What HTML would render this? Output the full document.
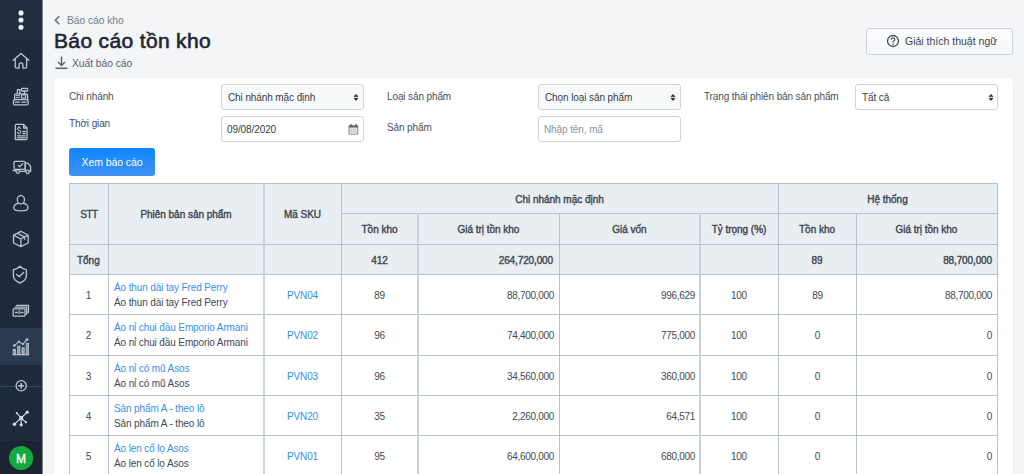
<!DOCTYPE html><html><head><meta charset="utf-8"><style>
*{box-sizing:border-box;margin:0;padding:0}
html,body{width:1024px;height:474px;overflow:hidden;background:#f4f5f7;font-family:"Liberation Sans",sans-serif;color:#212b36}
.ab{position:absolute;white-space:nowrap}
.sb{position:absolute;left:0;top:0;width:42px;height:474px;background:#1f2b3c}
.lbl{position:absolute;font-size:10px;color:#46505b;white-space:nowrap;letter-spacing:-0.12px}
.inp{position:absolute;width:143px;height:26px;border:1px solid #cfd5dc;border-radius:3px;background:#fff;font-size:10px;color:#363d46;padding-left:6px;line-height:26px;white-space:nowrap;letter-spacing:-0.1px}
.sel{background:#f8f9fa}
.btn{position:absolute;left:69px;top:148px;width:86px;height:28px;background:linear-gradient(#0d86ff,#3f92f2);border-radius:3px;color:#fff;font-size:10.5px;line-height:29px;text-align:center;letter-spacing:-0.1px}
.hl{position:absolute;height:1px;background:#b5c2cd}
.vl{position:absolute;width:1px;background:#b5c2cd}
.hbg{position:absolute;background:#e9eef2}
.th{position:absolute;font-size:10px;color:#3e4852;-webkit-text-stroke:0.4px #3e4852;white-space:nowrap;text-align:center;letter-spacing:-0.03px}
.td{position:absolute;font-size:10px;color:#424a53;white-space:nowrap;letter-spacing:-0.12px}
.num{letter-spacing:-0.3px}
.lk{color:#3590f0}
</style></head><body>
<div class="sb"></div>
<div class="ab" style="left:0;top:0;width:42px;height:42px;background:#212d3f"></div>
<div class="ab" style="left:0;top:328px;width:42px;height:37px;background:#2a3a51"></div>
<div class="ab" style="left:0;top:386px;width:42px;height:1px;background:#2e4660"></div>
<div class="ab" style="left:0;top:436px;width:42px;height:5px;background:#1f2c3e"></div>
<div class="ab" style="left:0;top:441px;width:42px;height:33px;background:#1b2433"></div>
<div class="ab" style="left:42px;top:0;width:1px;height:474px;background:#7d848e"></div>
<div class="ab" style="left:43px;top:0;width:1px;height:474px;background:#fbfcfd"></div>
<svg class="ab" style="left:0;top:0" width="42" height="474" viewBox="0 0 42 474">
<g fill="#f2f4f6"><circle cx="21" cy="12.9" r="2.55"/><circle cx="21" cy="20" r="2.55"/><circle cx="21" cy="27.2" r="2.55"/></g>
<g fill="none" stroke="#bac2cd" stroke-width="1.3" stroke-linecap="round" stroke-linejoin="round">
<path d="M13.2 60.3 L21 53.5 L28.8 60.3 M15.3 59 V67 q0 1.1 1.1 1.1 H19.1 V64.6 q0-1.8 1.9-1.8 q1.9 0 1.9 1.8 V68.1 H25.5 q1.1 0 1.1-1.1 V59"/>
<rect x="13.5" y="99.6" width="14.6" height="5.2" rx="1"/>
<path d="M14.6 99.6 V95.2 q0-1.4 1.4-1.4 H26.2 q1.4 0 1.4 1.4 V99.6"/>
<rect x="21.6" y="94.8" width="4" height="3.4" rx="0.4"/>
<rect x="21.4" y="88.4" width="6.2" height="2.6" rx="0.5"/>
<path d="M24.5 91 V93.8 M17.4 93.8 V89.6 H19.8 V93.8 M15.4 102.2 H19.6 M22 102.2 H26.2"/>
<path d="M16.4 95.6 H17.4 M18.6 95.6 H19.6 M16.4 97.6 H17.4 M18.6 97.6 H19.6" stroke-width="1.1"/>
<path d="M15.3 139.6 V125.4 q0-1 1-1 H23.6 L27 128 V138.6 q0 1-1 1 H16.3 Z M23.6 124.4 V128 H27"/>
<path d="M22.8 131.5 H25.2 M22.8 133.6 H25.2 M17.4 135.8 H25.2 M17.4 137.8 H25.2"/>
<path d="M20.6 128.4 q-0.5-0.9-1.6-0.9 q-1.5 0-1.5 1.3 q0 1.1 1.5 1.4 q1.7 0.3 1.7 1.6 q0 1.4-1.7 1.4 q-1.2 0-1.7-1 M19 126.5 V127.5 M19 133.2 V134.1" stroke-width="1.1"/>
<rect x="14" y="161.3" width="11.2" height="8" rx="1"/>
<path d="M18.2 165.4 L19.6 166.9 L22.6 163.8"/>
<path d="M25.2 163.2 H28 L30.6 166.5 V171.4 H29.3 M25.2 163.2 V171.4 H19.6 M13 170.6 H16"/>
<circle cx="17.8" cy="171.6" r="1.7"/><circle cx="27.6" cy="171.8" r="1.7"/>
<rect x="17.4" y="195.6" width="7" height="8.2" rx="3.5"/>
<path d="M18.4 203.2 q-4.6 1.3-4.6 4.7 q0 2.9 7.1 2.9 q7.1 0 7.1-2.9 q0-3.4-4.6-4.7"/>
<path d="M20.9 231.3 L28.2 235.2 V243 L20.9 246.6 L13.5 243 V235.2 Z M13.5 235.2 L20.9 239 L28.2 235.2 M20.9 239 V246.6 M17.2 233.2 L24.6 237.1 V239.2"/>
<path d="M19.9 266.3 Q16.8 269.6 13.4 269.8 V275.5 Q13.4 280.4 19.9 283 Q26.4 280.4 26.4 275.5 V269.8 Q23 269.6 19.9 266.3 Z" stroke-width="1.4"/>
<path d="M16.6 274.4 L19.3 276.8 L23.6 272.6" stroke-width="1.4"/>
<rect x="13.2" y="308.8" width="11.8" height="7.4" rx="0.6"/>
<path d="M14.9 307.1 H26.7 V314.4 M16.6 305.3 H28.5 V312.6"/>
<path d="M15.5 312.5 H17.5 M21 312.5 H23"/>
<path d="M20 310.6 q-1.6 0-1.2 1.1 q1.6 0.6 1 1.6 q-0.6 0.5-1.4 0" stroke-width="1"/>
<path d="M14.4 345.6 L18.9 341.7 L22.8 344.1 L27 339.6" stroke-width="1.1"/>
<circle cx="21.2" cy="385.8" r="5.1"/>
<path d="M18.9 385.8 H23.5 M21.2 383.5 V388.1" stroke-width="1.5"/>
</g>
<g fill="#bac2cd">
<g fill="#8c97a6" stroke="#bac2cd" stroke-width="0.9"><rect x="13.2" y="349.4" width="2.2" height="5.2"/><rect x="17.7" y="346.2" width="2.2" height="8.4"/><rect x="22" y="347.8" width="2.2" height="6.8"/><rect x="26.2" y="343.4" width="2.2" height="11.2"/></g><rect x="12.6" y="354.2" width="16.4" height="1.1"/>
<circle cx="14.4" cy="345.6" r="1.3"/><circle cx="18.9" cy="341.7" r="1.1"/><circle cx="22.8" cy="344.1" r="1.1"/><circle cx="27" cy="339.6" r="1.4"/>
</g>
<g fill="#d5dbe2" stroke="#d5dbe2" stroke-width="1.1">
<path d="M21.2 418 L16.8 413.1 M21.2 418 L27.2 412.2 M21.2 418 L14.5 424.2 M21.2 418 L21.2 424.8 M21.2 418 L26 422.3"/>
<rect x="19.3" y="416.1" width="3.8" height="3.8" rx="0.8" stroke="none"/>
<circle cx="16.8" cy="413.1" r="1.1" stroke="none"/><circle cx="27.2" cy="412.2" r="1.6" stroke="none"/><circle cx="14.5" cy="424.2" r="1.7" stroke="none"/><circle cx="21.2" cy="424.8" r="1.6" stroke="none"/><circle cx="26" cy="422.3" r="1.1" stroke="none"/>
</g>
<circle cx="21.1" cy="458" r="12.1" fill="#15a93d"/>
<text x="21.1" y="462.5" font-family="Liberation Sans" font-size="12" fill="#fff" stroke="#fff" stroke-width="0.35" text-anchor="middle">M</text>
</svg>
<div class="ab" style="left:67px;top:15px;color:#727d89;font-size:10.3px;letter-spacing:-0.05px">Báo cáo kho</div>
<svg class="ab" style="left:53px;top:15px" width="9" height="11" viewBox="0 0 9 11"><path d="M6.2 1.3 L2.3 5.3 L6.2 9.3" fill="none" stroke="#5f6a76" stroke-width="1.5"/></svg>
<div class="ab" style="left:54px;top:29px;font-size:21px;color:#1c2634;-webkit-text-stroke:0.6px #1c2634;letter-spacing:0.35px">Báo cáo tồn kho</div>
<svg class="ab" style="left:55px;top:55px" width="13" height="15" viewBox="0 0 13 15"><path d="M6.5 1.5 V10.5 M3 7 L6.5 10.5 L10 7" fill="none" stroke="#56616d" stroke-width="1.4"/><path d="M0.5 13.3 H12.5" stroke="#56616d" stroke-width="1.5"/></svg>
<div class="ab" style="left:72px;top:58px;color:#56616d;font-size:10.3px;letter-spacing:-0.05px">Xuất báo cáo</div>
<div class="ab" style="left:866px;top:28px;width:147px;height:27px;border:1px solid #cdd2d9;border-radius:3px;background:linear-gradient(#fdfdfe,#f6f7f9)"></div>
<svg class="ab" style="left:886px;top:34px" width="14" height="14" viewBox="0 0 14 14"><circle cx="7" cy="7" r="5.5" fill="none" stroke="#3f4954" stroke-width="1.3"/><path d="M5.2 5.7 q0-1.8 1.8-1.8 q1.8 0 1.8 1.6 q0 1-1 1.5 q-0.8 0.4-0.8 1.3 v0.5" fill="none" stroke="#4a535d" stroke-width="1.2"/><circle cx="7" cy="10.2" r="0.75" fill="#4a535d"/></svg>
<div class="ab" style="left:905px;top:35px;color:#3a4450;font-size:10.5px">Giải thích thuật ngữ</div>
<div class="ab" style="left:54px;top:78px;width:959px;height:420px;background:#fff;border-radius:3px;box-shadow:0 0 1px rgba(0,0,0,0.12)"></div>
<div class="lbl" style="left:69px;top:91px">Chi nhánh</div>
<div class="inp sel" style="left:221px;top:84px">Chi nhánh mặc định</div>
<div class="lbl" style="left:387px;top:91px">Loại sản phẩm</div>
<div class="inp sel" style="left:538px;top:84px">Chọn loại sản phẩm</div>
<div class="lbl" style="left:704px;top:91px">Trạng thái phiên bản sản phẩm</div>
<div class="inp" style="left:855px;top:84px">Tất cả</div>
<svg class="ab" style="left:353px;top:92px" width="6" height="10" viewBox="0 0 6 10"><path d="M1 4.6 L3 2.4 L5 4.6 Z M1 6.3 L3 8.6 L5 6.3 Z" fill="#1f2226" stroke="#1f2226" stroke-width="0.6" stroke-linejoin="round"/></svg>
<svg class="ab" style="left:670px;top:92px" width="6" height="10" viewBox="0 0 6 10"><path d="M1 4.6 L3 2.4 L5 4.6 Z M1 6.3 L3 8.6 L5 6.3 Z" fill="#1f2226" stroke="#1f2226" stroke-width="0.6" stroke-linejoin="round"/></svg>
<svg class="ab" style="left:988px;top:92px" width="6" height="10" viewBox="0 0 6 10"><path d="M1 4.6 L3 2.4 L5 4.6 Z M1 6.3 L3 8.6 L5 6.3 Z" fill="#1f2226" stroke="#1f2226" stroke-width="0.6" stroke-linejoin="round"/></svg>
<div class="lbl" style="left:69px;top:118px">Thời gian</div>
<div class="inp" style="left:221px;top:116px;padding-left:5px">09/08/2020</div>
<svg class="ab" style="left:348px;top:123px" width="11" height="12" viewBox="0 0 11 12"><rect x="0.6" y="2.2" width="9.6" height="9.4" rx="0.6" fill="#5f6770"/><rect x="1.4" y="4.6" width="8" height="6.3" fill="#eef0f3"/><path d="M1.4 6.7 H9.4 M1.4 8.8 H9.4 M3.4 4.6 V10.9 M5.4 4.6 V10.9 M7.4 4.6 V10.9" stroke="#b8bec5" stroke-width="0.55"/><path d="M2.9 0.8 V3.2 M7.9 0.8 V3.2" stroke="#5f6770" stroke-width="1.3"/></svg>
<div class="lbl" style="left:387px;top:122px">Sản phẩm</div>
<div class="inp" style="left:538px;top:116px;color:#8a939c;padding-left:5px">Nhập tên, mã</div>
<div class="btn">Xem báo cáo</div>
<div class="hbg" style="left:69px;top:183px;width:929px;height:92px"></div>
<div class="hl" style="left:69px;top:183px;width:929px"></div>
<div class="hl" style="left:341px;top:213px;width:657px"></div>
<div class="hl" style="left:69px;top:244px;width:929px"></div>
<div class="hl" style="left:69px;top:274px;width:929px"></div>
<div class="hl" style="left:69px;top:314px;width:929px"></div>
<div class="hl" style="left:69px;top:355px;width:929px"></div>
<div class="hl" style="left:69px;top:395px;width:929px"></div>
<div class="hl" style="left:69px;top:435px;width:929px"></div>
<div class="vl" style="left:69px;top:183px;height:291px"></div>
<div class="vl" style="left:108px;top:183px;height:291px"></div>
<div class="ab" style="left:263px;top:183px;width:2px;height:291px;background:#c9d3db"></div>
<div class="vl" style="left:341px;top:183px;height:291px"></div>
<div class="ab" style="left:417px;top:213px;width:2px;height:261px;background:#c9d3db"></div>
<div class="vl" style="left:559px;top:213px;height:261px"></div>
<div class="ab" style="left:699px;top:213px;width:2px;height:261px;background:#c9d3db"></div>
<div class="vl" style="left:778px;top:183px;height:291px"></div>
<div class="vl" style="left:856px;top:213px;height:261px"></div>
<div class="vl" style="left:997px;top:183px;height:291px"></div>
<div class="th" style="left:69px;top:209px;width:39px;letter-spacing:-0.5px;padding-left:1px">STT</div>
<div class="th" style="left:108px;top:209px;width:156px">Phiên bản sản phẩm</div>
<div class="th" style="left:264px;top:209px;width:77px">Mã SKU</div>
<div class="th" style="left:341px;top:194px;width:437px">Chi nhánh mặc định</div>
<div class="th" style="left:778px;top:194px;width:219px">Hệ thống</div>
<div class="th" style="left:341px;top:224px;width:77px">Tồn kho</div>
<div class="th" style="left:418px;top:224px;width:141px">Giá trị tồn kho</div>
<div class="th" style="left:559px;top:224px;width:141px">Giá vốn</div>
<div class="th" style="left:700px;top:224px;width:78px">Tỷ trọng (%)</div>
<div class="th" style="left:778px;top:224px;width:78px">Tồn kho</div>
<div class="th" style="left:856px;top:224px;width:141px">Giá trị tồn kho</div>
<div class="th" style="left:77px;top:255px;text-align:left">Tổng</div>
<div class="th" style="left:341px;top:255px;width:77px;letter-spacing:-0.12px">412</div>
<div class="th" style="left:418px;top:255px;width:135px;text-align:right;letter-spacing:-0.12px">264,720,000</div>
<div class="th" style="left:778px;top:255px;width:78px;letter-spacing:-0.1px">89</div>
<div class="th" style="left:856px;top:255px;width:136px;text-align:right;letter-spacing:-0.12px">88,700,000</div>
<div class="td" style="left:69px;top:290px;width:39px;text-align:center">1</div>
<div class="td lk" style="left:114px;top:282px">Áo thun dài tay Fred Perry</div>
<div class="td" style="left:114px;top:297px">Áo thun dài tay Fred Perry</div>
<div class="td lk" style="left:264px;top:290px;width:77px;text-align:center">PVN04</div>
<div class="td num" style="left:341px;top:290px;width:77px;text-align:center">89</div>
<div class="td num" style="left:418px;top:290px;width:136px;text-align:right">88,700,000</div>
<div class="td num" style="left:559px;top:290px;width:136px;text-align:right">996,629</div>
<div class="td num" style="left:700px;top:290px;width:78px;text-align:center">100</div>
<div class="td num" style="left:778px;top:290px;width:79px;text-align:center">89</div>
<div class="td num" style="left:857px;top:290px;width:135px;text-align:right">88,700,000</div>
<div class="td" style="left:69px;top:330px;width:39px;text-align:center">2</div>
<div class="td lk" style="left:114px;top:322px">Áo nỉ chui đầu Emporio Armani</div>
<div class="td" style="left:114px;top:337px">Áo nỉ chui đầu Emporio Armani</div>
<div class="td lk" style="left:264px;top:330px;width:77px;text-align:center">PVN02</div>
<div class="td num" style="left:341px;top:330px;width:77px;text-align:center">96</div>
<div class="td num" style="left:418px;top:330px;width:136px;text-align:right">74,400,000</div>
<div class="td num" style="left:559px;top:330px;width:136px;text-align:right">775,000</div>
<div class="td num" style="left:700px;top:330px;width:78px;text-align:center">100</div>
<div class="td num" style="left:778px;top:330px;width:79px;text-align:center">0</div>
<div class="td num" style="left:857px;top:330px;width:135px;text-align:right">0</div>
<div class="td" style="left:69px;top:371px;width:39px;text-align:center">3</div>
<div class="td lk" style="left:114px;top:363px">Áo nỉ có mũ Asos</div>
<div class="td" style="left:114px;top:378px">Áo nỉ có mũ Asos</div>
<div class="td lk" style="left:264px;top:371px;width:77px;text-align:center">PVN03</div>
<div class="td num" style="left:341px;top:371px;width:77px;text-align:center">96</div>
<div class="td num" style="left:418px;top:371px;width:136px;text-align:right">34,560,000</div>
<div class="td num" style="left:559px;top:371px;width:136px;text-align:right">360,000</div>
<div class="td num" style="left:700px;top:371px;width:78px;text-align:center">100</div>
<div class="td num" style="left:778px;top:371px;width:79px;text-align:center">0</div>
<div class="td num" style="left:857px;top:371px;width:135px;text-align:right">0</div>
<div class="td" style="left:69px;top:411px;width:39px;text-align:center">4</div>
<div class="td lk" style="left:114px;top:403px">Sản phẩm A - theo lô</div>
<div class="td" style="left:114px;top:418px">Sản phẩm A - theo lô</div>
<div class="td lk" style="left:264px;top:411px;width:77px;text-align:center">PVN20</div>
<div class="td num" style="left:341px;top:411px;width:77px;text-align:center">35</div>
<div class="td num" style="left:418px;top:411px;width:136px;text-align:right">2,260,000</div>
<div class="td num" style="left:559px;top:411px;width:136px;text-align:right">64,571</div>
<div class="td num" style="left:700px;top:411px;width:78px;text-align:center">100</div>
<div class="td num" style="left:778px;top:411px;width:79px;text-align:center">0</div>
<div class="td num" style="left:857px;top:411px;width:135px;text-align:right">0</div>
<div class="td" style="left:69px;top:451px;width:39px;text-align:center">5</div>
<div class="td lk" style="left:114px;top:443px">Áo len cổ lọ Asos</div>
<div class="td" style="left:114px;top:458px">Áo len cổ lọ Asos</div>
<div class="td lk" style="left:264px;top:451px;width:77px;text-align:center">PVN01</div>
<div class="td num" style="left:341px;top:451px;width:77px;text-align:center">95</div>
<div class="td num" style="left:418px;top:451px;width:136px;text-align:right">64,600,000</div>
<div class="td num" style="left:559px;top:451px;width:136px;text-align:right">680,000</div>
<div class="td num" style="left:700px;top:451px;width:78px;text-align:center">100</div>
<div class="td num" style="left:778px;top:451px;width:79px;text-align:center">0</div>
<div class="td num" style="left:857px;top:451px;width:135px;text-align:right">0</div>
</body></html>
